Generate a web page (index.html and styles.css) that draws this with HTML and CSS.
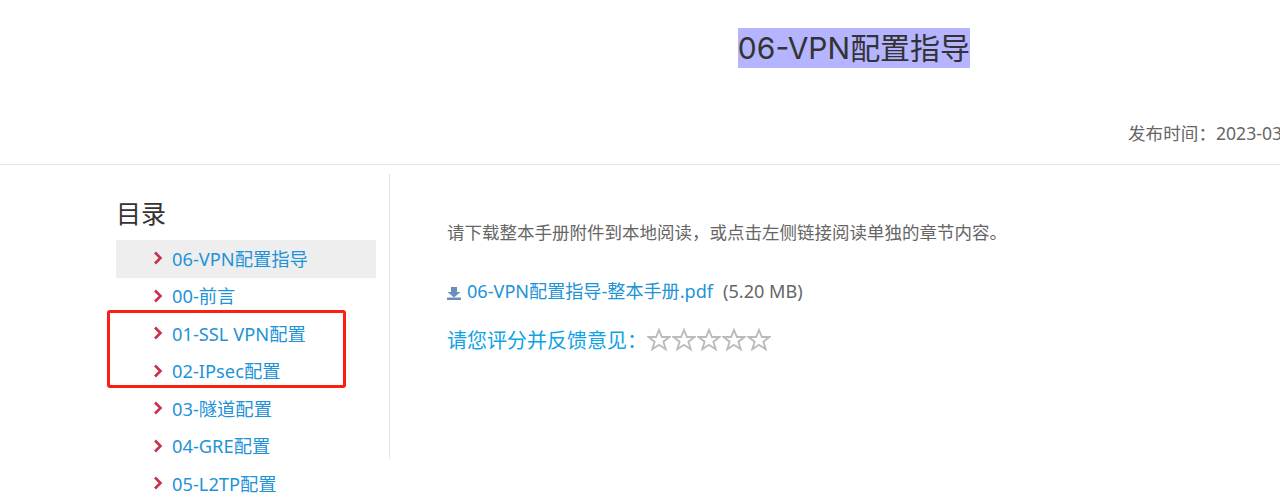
FILE: index.html
```html
<!DOCTYPE html>
<html lang="zh-CN">
<head>
  <meta charset="UTF-8" />
  <title>06-VPN配置指导</title>
  <link rel="stylesheet" href="styles.css">
</head>
<body>
  <header class="doc-header">
    <h1 class="doc-title"><span class="selected">06-VPN配置指导</span></h1>
    <p class="doc-date">发布时间：2023-03-28</p>
  </header>

  <div class="doc-body">
    <aside class="toc">
      <h2 class="toc-title">目录</h2>
      <ul class="toc-list">
        <li class="toc-item active"><svg class="chevron" viewBox="0 0 10 14"><path d="M2 1.500 7.500 7 2 12.500"/></svg><a href="#">06-VPN配置指导</a></li>
        <li class="toc-item"><svg class="chevron" viewBox="0 0 10 14"><path d="M2 1.500 7.500 7 2 12.500"/></svg><a href="#">00-前言</a></li>
        <li class="toc-item"><svg class="chevron" viewBox="0 0 10 14"><path d="M2 1.500 7.500 7 2 12.500"/></svg><a href="#">01-SSL VPN配置</a></li>
        <li class="toc-item"><svg class="chevron" viewBox="0 0 10 14"><path d="M2 1.500 7.500 7 2 12.500"/></svg><a href="#">02-IPsec配置</a></li>
        <li class="toc-item"><svg class="chevron" viewBox="0 0 10 14"><path d="M2 1.500 7.500 7 2 12.500"/></svg><a href="#">03-隧道配置</a></li>
        <li class="toc-item"><svg class="chevron" viewBox="0 0 10 14"><path d="M2 1.500 7.500 7 2 12.500"/></svg><a href="#">04-GRE配置</a></li>
        <li class="toc-item"><svg class="chevron" viewBox="0 0 10 14"><path d="M2 1.500 7.500 7 2 12.500"/></svg><a href="#">05-L2TP配置</a></li>
      </ul>
    </aside>

    <main class="content">
      <p class="intro">请下载整本手册附件到本地阅读，或点击左侧链接阅读单独的章节内容。</p>
      <p class="download">
        <svg class="download-icon" viewBox="0 0 14 13"><path d="M4 0h6v5h3.500L7 10.500 .5 5H4z"/><path d="M0 10.500h14V13H0z"/></svg>
        <a href="#">06-VPN配置指导-整本手册.pdf</a>
        <span class="file-size">(5.20 MB)</span>
      </p>
      <div class="rating">
        <span class="rating-label">请您评分并反馈意见：</span>
        <span class="stars">
          <svg class="star" viewBox="0 0 24 24"><path d="M12 2l2.900 7h7.600l-6.100 4.700 2.300 7.500L12 16.800l-6.700 4.400 2.300-7.500L1.500 9h7.600z"/></svg>
          <svg class="star" viewBox="0 0 24 24"><path d="M12 2l2.900 7h7.600l-6.100 4.700 2.300 7.500L12 16.800l-6.700 4.400 2.300-7.500L1.500 9h7.600z"/></svg>
          <svg class="star" viewBox="0 0 24 24"><path d="M12 2l2.900 7h7.600l-6.100 4.700 2.300 7.500L12 16.800l-6.700 4.400 2.300-7.500L1.500 9h7.600z"/></svg>
          <svg class="star" viewBox="0 0 24 24"><path d="M12 2l2.900 7h7.600l-6.100 4.700 2.300 7.500L12 16.800l-6.700 4.400 2.300-7.500L1.500 9h7.600z"/></svg>
          <svg class="star" viewBox="0 0 24 24"><path d="M12 2l2.900 7h7.600l-6.100 4.700 2.300 7.500L12 16.800l-6.700 4.400 2.300-7.500L1.500 9h7.600z"/></svg>
        </span>
      </div>
    </main>
  </div>

  <div class="annotation"></div>
</body>
</html>
```

FILE: styles.css
```css
* {
  box-sizing: border-box;
}

html, body {
  height: 499px;
  overflow: hidden;
}

body {
  margin: 0;
  position: relative;
  background: #fff;
  color: #666;
  font-family: "Noto Sans", "Noto Sans CJK SC", sans-serif;
  font-size: 18.3px;
}

a {
  color: #1e93d8;
  text-decoration: none;
}

/* the header is wider than the window, the date runs off the right edge */
.doc-header {
  width: 1708px;
  height: 165px;
  padding-top: 28px;
  border-bottom: 1px solid #e4e4e4;
}

.doc-title {
  margin: 0;
  text-align: center;
  font-family: Inter, "Noto Sans CJK SC", sans-serif;
  font-size: 30px;
  font-weight: 400;
  line-height: 40px;
  color: #333;
}

.selected {
  display: inline-block;
  background: #b4b4ff;
}

.doc-date {
  margin: 51px 0 0 1128px;
  font-size: 17.6px;
  line-height: 28px;
  white-space: nowrap;
}

.doc-body {
  display: flex;
  align-items: flex-start;
  padding: 9px 0 0 116px;
}

.toc {
  width: 274px;
  height: 285px;
  border-right: 1px solid #e4e4e4;
}

.toc-title {
  margin: 22px 0 9px;
  font-size: 25px;
  font-weight: 400;
  line-height: 35px;
  color: #333;
}

.toc-list {
  width: 260px;
  margin: 0;
  padding: 0;
  list-style: none;
}

.toc-item {
  display: flex;
  align-items: center;
  height: 37.5px;
  padding-left: 37px;
  white-space: nowrap;
}

.toc-item a {
  margin-top: -2px;
}

.toc-item.active {
  background: #eee;
}

.chevron {
  width: 10px;
  height: 14px;
  margin-right: 9px;
  margin-top: -1px;
  fill: none;
  stroke: #c9304f;
  stroke-width: 2.6;
}

.content {
  padding: 43px 0 0 57px;
}

.intro {
  margin: 0;
  font-size: 17.5px;
  line-height: 30px;
}

.download {
  display: flex;
  align-items: center;
  margin: 29px 0 0;
  font-size: 18.1px;
  line-height: 30px;
}

.download-icon {
  width: 14px;
  height: 13px;
  margin: 5px 6px 0 0;
  fill: #6a8fb8;
}

.file-size {
  margin-left: 10px;
}

.rating {
  display: flex;
  align-items: center;
  margin-top: 18px;
  line-height: 30px;
  color: #0ea2e6;
  font-size: 20px;
}

.rating-label {
  margin-top: 2px;
}

.stars {
  display: flex;
  gap: 1px;
}

.star {
  width: 24px;
  height: 24px;
  fill: #fff;
  stroke: #bbb;
  stroke-width: 1.9;
}

/* red box drawn on top of the screenshot */
.annotation {
  position: absolute;
  left: 107px;
  top: 310px;
  width: 239px;
  height: 78px;
  border: 3px solid #fb1f10;
  border-radius: 3px;
}
```
